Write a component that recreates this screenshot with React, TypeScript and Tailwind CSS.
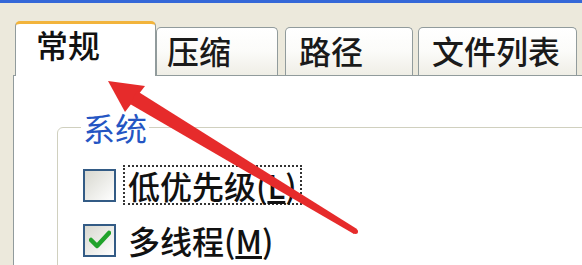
import React from "react";

const font = { fontFamily: '"Noto Sans CJK SC", "Noto Sans", sans-serif' };

function Tab({ label, className }: { label: string; className: string }) {
  return (
    <div
      className={`h-[48px] border border-b-0 border-[#919b9c] rounded-t-[5px] bg-gradient-to-b from-[#ffffff] via-[#fbfbf9] to-[#efeee6] pt-[6px] text-[32px] leading-[32px] font-medium text-[#1a1a1a] whitespace-nowrap ${className}`}
    >
      {label}
    </div>
  );
}

export default function App() {
  return (
    <div
      className="relative w-[582px] h-[265px] overflow-hidden bg-[#ece9dc] border-t-[3px] border-[#3568d8] flex flex-col"
      style={font}
    >
      <div className="flex items-end pl-[15px] pt-[18px]">
        <div className="relative z-10 -mb-[1px] h-[55px] w-[141px] bg-white border border-b-0 border-[#919b9c] border-t-[3px] border-t-[#f2b43c] rounded-t-[5px] pl-[20px] pt-[4px] text-[32px] leading-[32px] font-medium text-[#111]">
          常规
        </div>
        <Tab label="压缩" className="w-[122px] pl-[10px]" />
        <Tab label="路径" className="ml-[7px] w-[128px] pl-[13px]" />
        <Tab label="文件列表" className="ml-[5px] w-[159px] pl-[13px]" />
      </div>
      <div className="ml-[13px] flex-1 bg-white border-l border-t border-[#919b9c]">
        <fieldset className="ml-[43px] mt-[35px] mr-[-20px] border border-[#d0d0bf] rounded-[6px] pl-[25px] pr-0 pb-4">
          <legend className="-ml-[2px] px-[2px] text-[32px] leading-[32px] text-[#2455c3]">
            系统
          </legend>
          <div className="mt-[22px] flex items-center h-[40px]">
            <div className="w-[33px] h-[33px] border-2 border-[#335b85] bg-gradient-to-br from-[#d8d8d0] to-white" />
            <div className="ml-[7px] h-[40px] border-2 border-dotted border-[#333] pl-[3px] pr-[3px] py-[2px] text-[32px] leading-[32px] font-medium text-[#111] whitespace-nowrap">
              低优先级(<span className="underline">L</span>)
            </div>
          </div>
          <div className="mt-[15px] flex items-center h-[40px]">
            <div className="w-[33px] h-[33px] border-2 border-[#335b85] bg-gradient-to-br from-[#d8d8d0] to-white flex items-center justify-center">
              <svg width="22" height="20" viewBox="0 0 22 20">
                <path d="M2 10 L8 16 L20 3" fill="none" stroke="#21a32b" strokeWidth="4.5" strokeLinecap="round" strokeLinejoin="round" />
              </svg>
            </div>
            <div className="ml-[9px] pl-[3px] text-[32px] leading-[32px] font-medium text-[#111] whitespace-nowrap">
              多线程(<span className="underline">M</span>)
            </div>
          </div>
        </fieldset>
      </div>
      <svg
        className="absolute left-0 top-0 pointer-events-none"
        width="582"
        height="265"
        viewBox="0 0 582 265"
      >
        <polygon points="108,78 145,83 125,109" fill="#e62b2b" />
        <polygon points="130,101 137,88 357,226 354,231" fill="#e62b2b" />
        <circle cx="355.5" cy="228.5" r="2.5" fill="#e62b2b" />
      </svg>
    </div>
  );
}
